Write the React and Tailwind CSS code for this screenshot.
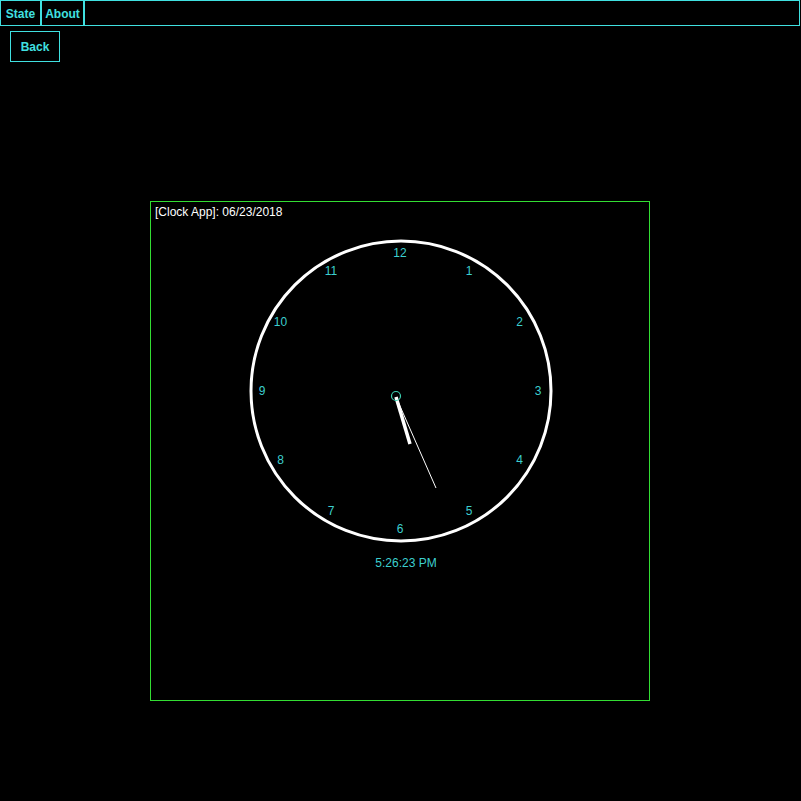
import React from 'react'

const CX = 250
const CY = 189
const R = 150
const NUM_R = 138

const ClockFace = () => {
  const nums = Array.from({ length: 12 }, (_, i) => i + 1)
  return (
    <svg width="500" height="500" viewBox="0 0 500 500" className="absolute inset-0">
      <circle cx={CX} cy={CY} r={R} fill="none" stroke="#ffffff" strokeWidth="3" />
      {nums.map((n) => {
        const a = (n * 30 * Math.PI) / 180
        const x = CX - 1 + NUM_R * Math.sin(a)
        const y = CY - NUM_R * Math.cos(a)
        return (
          <text
            key={n}
            x={x}
            y={y + 4}
            textAnchor="middle"
            fill="#3ccfcf"
            fontSize="12"
            fontFamily="'Liberation Sans', Arial, sans-serif"
          >
            {n}
          </text>
        )
      })}
      {/* hour hand */}
      <line x1="245" y1="195" x2="259" y2="242" stroke="#ffffff" strokeWidth="3.5" />
      {/* minute hand */}
      <line x1="245" y1="195" x2="285" y2="286" stroke="#ffffff" strokeWidth="1" />
      <circle cx="245" cy="194" r="4.5" fill="none" stroke="#3ccfb0" strokeWidth="1.2" />
      <text
        x="255"
        y="365"
        textAnchor="middle"
        fill="#3ccfcf"
        fontSize="12"
        fontFamily="'Liberation Sans', Arial, sans-serif"
      >
        5:26:23 PM
      </text>
    </svg>
  )
}

export default function App() {
  return (
    <div className="w-[801px] h-[801px] bg-black overflow-hidden font-['Liberation_Sans',Arial,sans-serif]">
      <div className="flex h-[26px] w-[800px] border border-[#40e0e0]">
        <div className="w-[41px] h-full border-r-2 border-[#40e0e0] flex items-center justify-center pt-[1px] text-[12px] font-bold text-[#40e0e0]">
          State
        </div>
        <div className="w-[43px] h-full border-r-2 border-[#40e0e0] flex items-center justify-center pt-[1px] text-[12px] font-bold text-[#40e0e0]">
          About
        </div>
      </div>
      <div className="ml-[10px] mt-[5px] w-[50px] h-[31px] border border-[#40e0e0] flex items-center justify-center text-[12px] font-bold text-[#40e0e0]">
        Back
      </div>
      <div className="relative ml-[150px] mt-[139px] w-[500px] h-[500px] border border-[#33dd33]">
        <ClockFace />
        <div className="relative pl-[4px] pt-[3px] text-[12px] leading-[14px] text-white">
          [Clock App]: 06/23/2018
        </div>
      </div>
    </div>
  )
}
